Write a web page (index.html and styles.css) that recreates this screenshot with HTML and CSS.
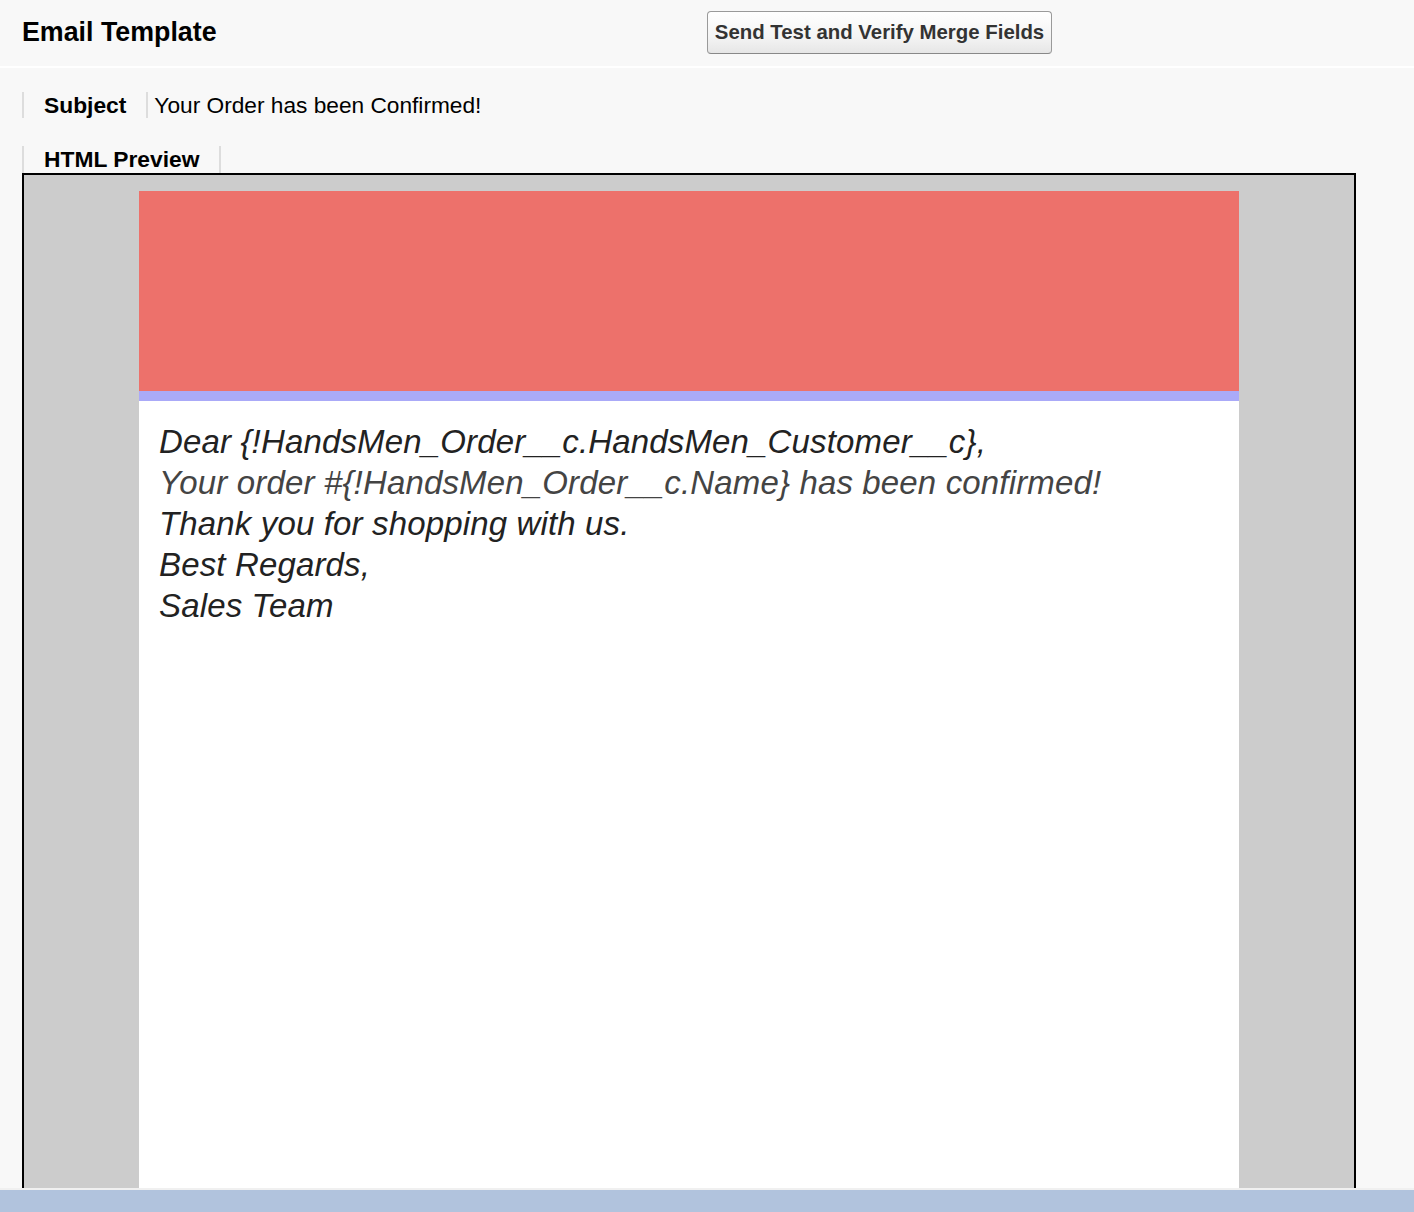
FILE: index.html
```html
<!DOCTYPE html>
<html>
<head>
<meta charset="utf-8">
<link rel="stylesheet" href="styles.css">
</head>
<body>
<div class="header">
  <div class="title">Email Template</div>
  <button class="btn">Send Test and Verify Merge Fields</button>
</div>
<div class="content">
  <div class="row subject-row">
    <div class="label">Subject</div>
    <div class="value">Your Order has been Confirmed!</div>
  </div>
  <div class="row preview-row">
    <div class="label label-boxed">HTML Preview</div>
  </div>
  <div class="preview">
    <div class="email">
      <div class="banner"></div>
      <div class="stripe"></div>
      <div class="body-text">
        <div class="line">Dear {!HandsMen_Order__c.HandsMen_Customer__c},</div>
        <div class="line light">Your order #{!HandsMen_Order__c.Name} has been confirmed!</div>
        <div class="line">Thank you for shopping with us.</div>
        <div class="line">Best Regards,</div>
        <div class="line">Sales Team</div>
      </div>
    </div>
  </div>
</div>
<div class="footer-bar"></div>
</body>
</html>
```

FILE: styles.css
```css
html, body {
  margin: 0;
  padding: 0;
  background: #f8f8f8;
  font-family: "Liberation Sans", Arial, Helvetica, sans-serif;
  color: #000;
}
body {
  height: 1212px;
  overflow: hidden;
}
.header {
  display: flex;
  align-items: center;
  height: 66px;
  padding-left: 22px;
  border-bottom: 2px solid #ffffff;
}
.title {
  width: 685px;
  font-size: 26.8px;
  font-weight: bold;
  color: #000;
  margin-top: -2px;
}
.btn {
  font-family: "Liberation Sans", Arial, Helvetica, sans-serif;
  font-size: 20.4px;
  font-weight: bold;
  color: #333;
  height: 43px;
  width: 345px;
  padding: 0;
  border: 1px solid #9a9a9a;
  border-bottom-color: #888;
  border-radius: 4px;
  background: linear-gradient(#ffffff, #f4f4f4 60%, #e6e6e6);
  margin-top: -2px;
}
.content {
  padding-left: 22px;
}
.row {
  display: flex;
  align-items: stretch;
}
.subject-row {
  margin-top: 24px;
  height: 26px;
}
.preview-row {
  margin-top: 28px;
  height: 27px;
}
.label {
  font-size: 22.8px;
  font-weight: bold;
  line-height: 26px;
  border-left: 2px solid #dddddd;
  padding: 0 20px;
  border-right: 2px solid #dddddd;
}
.preview-row .label {
  line-height: 27px;
}
.value {
  font-size: 22.7px;
  line-height: 26px;
  padding-left: 6px;
}
.preview {
  width: 1330px;
  border: 2px solid #000;
  background: #cccccc;
  padding-top: 16px;
}
.email {
  width: 1100px;
  margin: 0 auto;
  background: #ffffff;
  height: 1000px;
}
.banner {
  height: 200px;
  background: #ed716b;
}
.stripe {
  height: 10px;
  background: #aaaaf8;
}
.body-text {
  padding: 20px 20px 0 20px;
  font-size: 33px;
  line-height: 41px;
  font-style: italic;
  letter-spacing: 0.15px;
  color: #222222;
}
.line.light {
  color: #444444;
}
.footer-bar {
  position: fixed;
  left: 0;
  right: 0;
  bottom: 0;
  height: 22px;
  background: #b1c3dd;
  border-top: 2px solid #f0f0f0;
}
```
